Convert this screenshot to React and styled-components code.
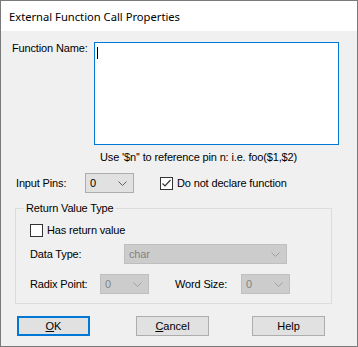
import React from 'react'
import styled, { createGlobalStyle } from 'styled-components'

const Global = createGlobalStyle`
  html, body { margin: 0; padding: 0; background: #fff; }
  * { box-sizing: border-box; }
`

const Window = styled.div`
  width: 358px;
  height: 347px;
  border: 1px solid #7a7a7a;
  background: #f0f0f0;
  display: flex;
  flex-direction: column;
  font-family: 'Liberation Sans', Arial, sans-serif;
  font-size: 11px;
  letter-spacing: -0.15px;
  color: #000;
`

const TitleBar = styled.div`
  height: 30px;
  flex: none;
  background: #fff;
  padding-left: 8px;
  display: flex;
  align-items: center;
  font-family: 'Noto Sans', 'Open Sans', sans-serif;
  font-size: 11.2px;
  letter-spacing: 0;
  color: #000;
`

const Body = styled.div`
  flex: 1;
  display: flex;
  flex-direction: column;
`

const Row = styled.div`
  display: flex;
  align-items: ${p => p.$align || 'center'};
  margin-top: ${p => p.$top || 0}px;
  padding-left: ${p => p.$left || 0}px;
`

const Label = styled.span`
  display: inline-block;
  width: ${p => p.$w}px;
  margin-left: ${p => p.$left || 0}px;
  flex: none;
  line-height: 13px;
  white-space: nowrap;
  color: #000;
`

const TextBox = styled.div`
  width: 245px;
  height: 103px;
  background: #fff;
  border: 1px solid #0078d7;
  padding: 4px 0 0 2px;
`

const Caret = styled.div`
  width: 1px;
  height: 12px;
  background: #000;
`

const Hint = styled.div`
  line-height: 13px;
  margin-top: 6px;
  padding-left: 99px;
`

const SelectBox = styled.div`
  width: ${p => p.$w}px;
  height: 20px;
  flex: none;
  display: flex;
  align-items: center;
  justify-content: space-between;
  padding: 0 6px 0 4px;
  background: ${p => (p.$disabled ? '#cccccc' : '#e1e1e1')};
  border: 1px solid ${p => (p.$disabled ? '#bfbfbf' : '#adadad')};
  color: ${p => (p.$disabled ? '#838383' : '#000')};
`

const Chevron = ({ disabled }) => (
  <svg width="9" height="5" viewBox="0 0 9 5">
    <path d="M0.5 0.5 L4.5 4.5 L8.5 0.5" fill="none" stroke={disabled ? '#a0a0a0' : '#606060'} strokeWidth="1" />
  </svg>
)

const Select = ({ w, value, disabled }) => (
  <SelectBox $w={w} $disabled={disabled}>
    <span>{value}</span>
    <Chevron disabled={disabled} />
  </SelectBox>
)

const CheckLabel = styled.label`
  display: flex;
  align-items: center;
  gap: 4px;
  margin-left: ${p => p.$left || 0}px;
  line-height: 13px;
`

const Box = styled.span`
  width: 13px;
  height: 13px;
  flex: none;
  border: 1px solid #333;
  background: #fff;
  display: flex;
  align-items: center;
  justify-content: center;
`

const Check = ({ checked, children, left }) => (
  <CheckLabel $left={left}>
    <Box>
      {checked && (
        <svg width="11" height="11" viewBox="0 0 11 11">
          <path d="M1.5 5.5 L4 8 L9.5 2" fill="none" stroke="#333" strokeWidth="1.2" />
        </svg>
      )}
    </Box>
    <span>{children}</span>
  </CheckLabel>
)

const Group = styled.fieldset`
  margin: 9px 0 0 14px;
  width: 317px;
  height: 102px;
  padding: 0 0 0 14px;
  border: 1px solid #dcdcdc;
  legend {
    padding: 0 2px;
    margin-left: -6px;
    line-height: 13px;
  }
`

const Buttons = styled.div`
  display: flex;
  margin-top: 12px;
  padding-left: 16px;
`

const Button = styled.button`
  width: 73px;
  height: 20px;
  margin-right: ${p => p.$gap || 0}px;
  background: #e1e1e1;
  border: ${p => (p.$default ? '2px solid #0078d7' : '1px solid #adadad')};
  font-family: 'Liberation Sans', Arial, sans-serif;
  font-size: 11px;
  color: #000;
  padding: 0;
  u { text-decoration: underline; }
`

export default function App() {
  return (
    <>
      <Global />
      <Window>
        <TitleBar>External Function Call Properties</TitleBar>
        <Body>
          <Row $align="flex-start" $top={11} $left={11}>
            <Label $w={82}>Function Name:</Label>
            <TextBox><Caret /></TextBox>
          </Row>
          <Hint>Use '$n'' to reference pin n: i.e. foo($1,$2)</Hint>
          <Row $top={9} $left={15}>
            <Label $w={69}>Input Pins:</Label>
            <Select w={49} value="0" />
            <Check checked left={26}>Do not declare function</Check>
          </Row>
          <Group>
            <legend>Return Value Type</legend>
            <Row $top={9}>
              <Check>Has return value</Check>
            </Row>
            <Row $top={7}>
              <Label $w={94}>Data Type:</Label>
              <Select w={163} value="char" disabled />
            </Row>
            <Row $top={10}>
              <Label $w={70}>Radix Point:</Label>
              <Select w={49} value="0" disabled />
              <Label $w={66} $left={26}>Word Size:</Label>
              <Select w={49} value="0" disabled />
            </Row>
          </Group>
          <Buttons>
            <Button $default $gap={46}><u>O</u>K</Button>
            <Button $gap={43}><u>C</u>ancel</Button>
            <Button>Help</Button>
          </Buttons>
        </Body>
      </Window>
    </>
  )
}
